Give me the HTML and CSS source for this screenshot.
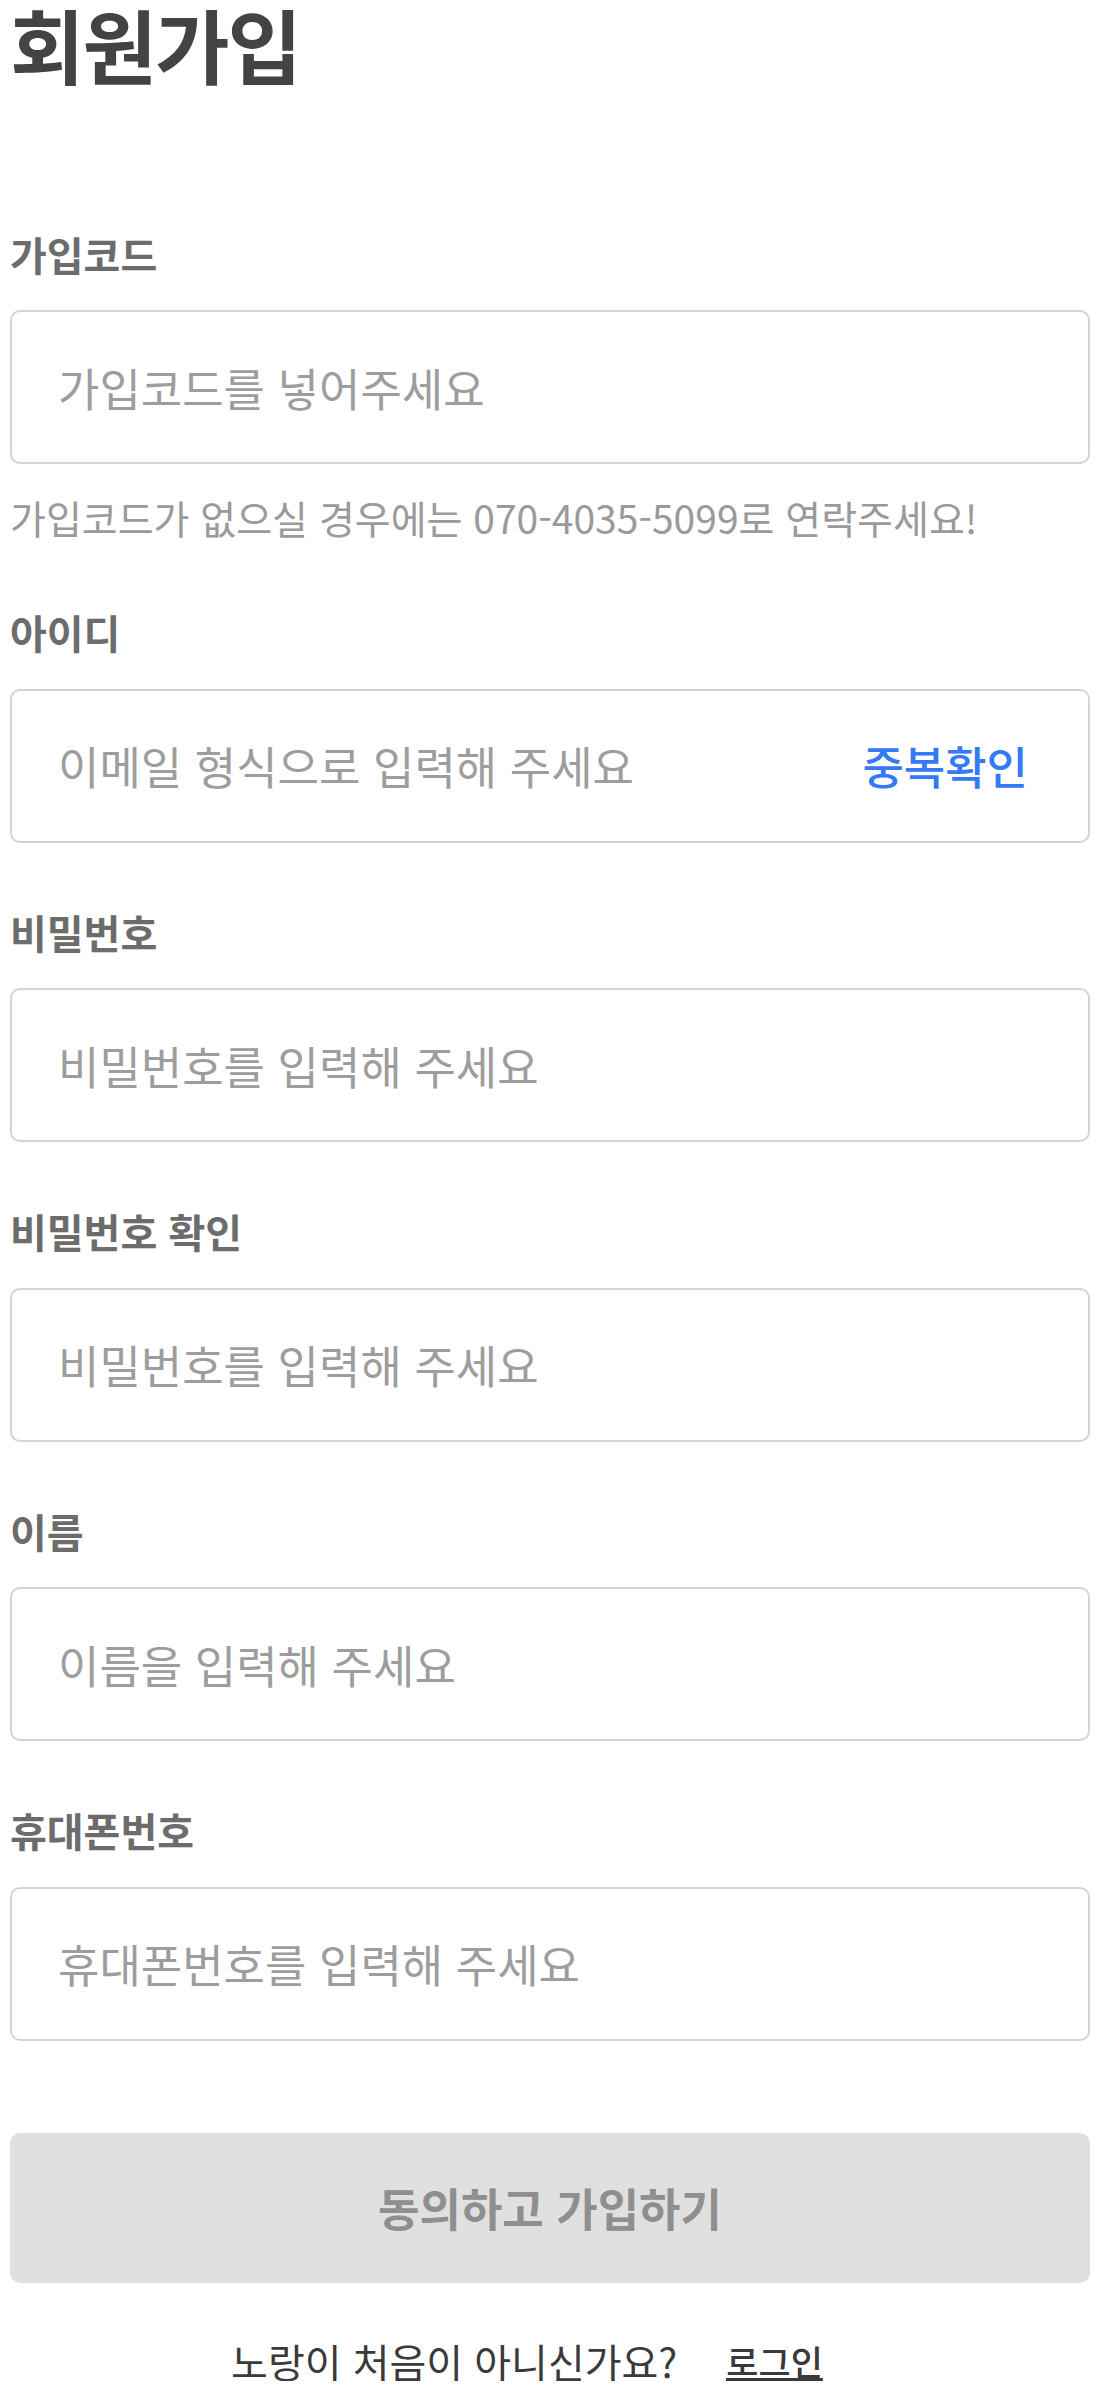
FILE: index.html
```html
<!DOCTYPE html>
<html lang="ko">
<head>
<meta charset="utf-8">
<title>회원가입</title>
<link rel="stylesheet" href="styles.css">
</head>
<body>
<main class="signup">
  <h1 class="title">회원가입</h1>
  <form class="form">
    <div class="field">
      <label class="label" for="code">가입코드</label>
      <div class="box"><input class="input" id="code" type="text" placeholder="가입코드를 넣어주세요"></div>
      <p class="hint">가입코드가 없으실 경우에는 070-4035-5099로 연락주세요!</p>
    </div>
    <div class="field">
      <label class="label" for="id">아이디</label>
      <div class="box"><input class="input" id="id" type="text" placeholder="이메일 형식으로 입력해 주세요"><span class="check">중복확인</span></div>
    </div>
    <div class="field">
      <label class="label" for="pw">비밀번호</label>
      <div class="box"><input class="input" id="pw" type="text" placeholder="비밀번호를 입력해 주세요"></div>
    </div>
    <div class="field">
      <label class="label" for="pw2">비밀번호 확인</label>
      <div class="box"><input class="input" id="pw2" type="text" placeholder="비밀번호를 입력해 주세요"></div>
    </div>
    <div class="field">
      <label class="label" for="name">이름</label>
      <div class="box"><input class="input" id="name" type="text" placeholder="이름을 입력해 주세요"></div>
    </div>
    <div class="field">
      <label class="label" for="phone">휴대폰번호</label>
      <div class="box"><input class="input" id="phone" type="text" placeholder="휴대폰번호를 입력해 주세요"></div>
    </div>
  </form>
  <button class="submit" type="button">동의하고 가입하기</button>
  <p class="login-row"><span class="login-text">노랑이 처음이 아니신가요?</span><a class="login-link" href="#">로그인</a></p>
</main>
</body>
</html>
```
FILE: styles.css
```css
* {
  box-sizing: border-box;
}

html, body {
  margin: 0;
  padding: 0;
  background: #ffffff;
}

body {
  font-family: "Noto Sans CJK KR", "Noto Sans", sans-serif;
}

.signup {
  padding: 2px 10px 0;
  display: flex;
  flex-direction: column;
}

.title {
  margin: 0 0 150.5px;
  font-size: 81px;
  line-height: 1;
  font-weight: 700;
  color: #434343;
  letter-spacing: -2px;
}

.form {
  display: flex;
  flex-direction: column;
  gap: 69px;
}

.field {
  display: flex;
  flex-direction: column;
}

.label {
  display: block;
  margin-bottom: 36.5px;
  font-size: 40px;
  line-height: 1;
  font-weight: 700;
  color: #6c6c6c;
}

.box {
  display: flex;
  align-items: center;
  height: 154px;
  padding: 0 60px 0 46px;
  border: 2px solid #d4d4d4;
  border-radius: 10px;
  background: #ffffff;
}

.input {
  flex: 1;
  min-width: 0;
  height: 100%;
  padding: 0;
  border: none;
  outline: none;
  background: transparent;
  font-family: inherit;
  font-size: 45px;
  color: #333333;
}

.input::placeholder {
  color: #9d9d9d;
  opacity: 1;
}

.check {
  flex: none;
  font-size: 45px;
  line-height: 1;
  font-weight: 500;
  color: #3479f5;
}

.hint {
  margin: 34px 0 6px;
  font-size: 39px;
  line-height: 1;
  color: #9a9a9a;
}

.submit {
  margin-top: 92px;
  width: 100%;
  height: 150px;
  border: none;
  border-radius: 10px;
  background: #e0e0e0;
  font-family: inherit;
  font-size: 45px;
  font-weight: 700;
  color: #8f8f8f;
}

.login-row {
  margin: 58px 0 0;
  padding-right: 46px;
  display: flex;
  justify-content: center;
  align-items: flex-end;
  gap: 49px;
  font-size: 40px;
  line-height: 1;
  color: #3a3a3a;
}

.login-link {
  display: inline-block;
  font-size: 35px;
  line-height: 1;
  font-weight: 500;
  color: #3a3a3a;
  text-decoration: none;
  border-bottom: 3px solid #3a3a3a;
  padding-bottom: 0;
}
```
